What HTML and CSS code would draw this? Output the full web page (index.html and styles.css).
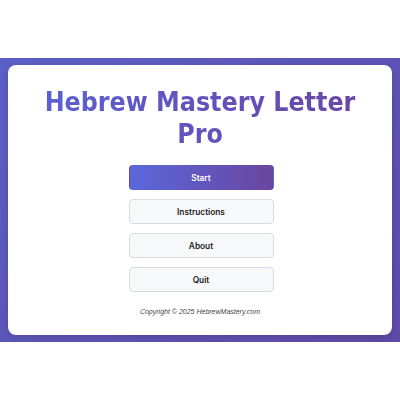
FILE: index.html
```html
<!DOCTYPE html>
<html>
<head>
<meta charset="utf-8">
<link rel="stylesheet" href="styles.css">
</head>
<body>
<div class="band">
  <div class="card">
    <h1 class="title">Hebrew Mastery Letter Pro</h1>
    <div class="menu">
      <button class="btn primary">Start</button>
      <button class="btn">Instructions</button>
      <button class="btn">About</button>
      <button class="btn">Quit</button>
    </div>
    <p class="copy">Copyright © 2025 HebrewMastery.com</p>
  </div>
</div>
</body>
</html>
```
FILE: styles.css
```css
html, body { margin: 0; padding: 0; background: #fff; }
body { padding-top: 58px; }
.band {
  background: linear-gradient(135deg, #5b5fc7, #5f4aa6);
  padding: 7px 8px;
}
.card {
  background: #fff;
  border-radius: 8px;
  padding: 21px 16px 20px;
  display: flex;
  flex-direction: column;
  align-items: center;
  box-shadow: 0 2px 6px rgba(0,0,0,0.15);
}
.title {
  margin: 0 0 15px;
  font-family: "DejaVu Sans Condensed", "DejaVu Sans", sans-serif;
  font-stretch: condensed;
  font-weight: bold;
  font-size: 26.5px;
  line-height: 32px;
  text-align: center;
  background: linear-gradient(90deg, #5a62d4, #6a44a4);
  -webkit-background-clip: text;
  background-clip: text;
  color: transparent;
}
.menu {
  display: flex;
  flex-direction: column;
  gap: 9px;
  width: 145px;
  margin-left: 2px;
}
.btn {
  height: 25px;
  border: 1px solid #d8dce2;
  border-radius: 4px;
  background: #f7f8fa;
  font-family: Inter, "Liberation Sans", sans-serif;
  font-weight: 600;
  font-size: 8.3px;
  color: #222;
  padding: 0;
}
.btn.primary {
  background: linear-gradient(90deg, #5a68dc, #6a45a0);
  border-color: transparent;
  color: #fff;
}
.copy {
  margin: 16px 0 0;
  font-family: "Liberation Sans", Arial, sans-serif;
  font-style: italic;
  font-size: 7px;
  color: #444;
}
```
